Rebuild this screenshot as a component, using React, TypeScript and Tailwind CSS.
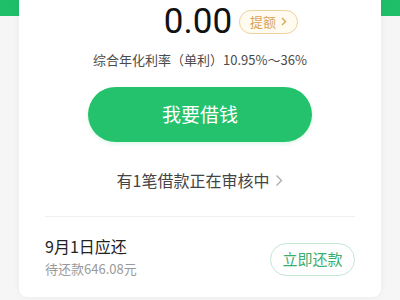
const App = () => {
  return (
    <div
      className="w-[400px] h-[300px] overflow-hidden bg-[linear-gradient(#1fbf6a_16px,#f6f6f6_16px)] px-[19px]"
      style={{ fontFamily: '"Noto Sans CJK SC", "Noto Sans", sans-serif' }}
    >
      <div className="bg-white h-[297px] rounded-b-lg shadow-[0_0_6px_rgba(0,0,0,0.06)] flex flex-col items-center">
        <div className="flex items-center mt-[3px] ml-[62px]">
          <span className="text-[35px] leading-[37px] text-[#111] font-['Roboto',sans-serif]">0.00</span>
          <span className="ml-[7px] h-[24px] px-[10px] rounded-full border border-[#ecd29c] bg-[#fffbf1] text-[#d8a455] text-[13px] flex items-center gap-[5px]">
            提额
            <svg width="6" height="9" viewBox="0 0 6 9" fill="none">
              <path d="M1 1l3.5 3.5L1 8" stroke="#d8a455" strokeWidth="1.4" />
            </svg>
          </span>
        </div>
        <div className="mt-[11px] text-[13px] leading-[18px] text-[#4a4a4a]">综合年化利率（单利）10.95%～36%</div>
        <button className="mt-[18px] w-[224px] h-[55px] rounded-full bg-[#25c26d] text-white text-[19px] shadow-[0_2px_4px_rgba(37,194,109,0.15)]">
          我要借钱
        </button>
        <div className="mt-[27px] flex items-center gap-[6px] text-[16px] leading-[22px] text-[#444]">
          有1笔借款正在审核中
          <svg width="8" height="13" viewBox="0 0 8 13" fill="none">
            <path d="M1.5 1.5l5 5-5 5" stroke="#aaa" strokeWidth="1.3" />
          </svg>
        </div>
        <div className="mt-[25px] w-[310px] h-px bg-[#f0f0f0]" />
        <div className="w-[310px] flex items-center justify-between mt-[18px]">
          <div className="flex flex-col">
            <span className="text-[16px] leading-[22px] text-[#222]">9月1日应还</span>
            <span className="text-[13px] leading-[18px] text-[#9a9a9a] mt-[3px]">待还款646.08元</span>
          </div>
          <button className="mt-[6px] w-[85px] h-[33px] rounded-full border border-[#c2e6d2] text-[#3aae6e] text-[15px]">
            立即还款
          </button>
        </div>
      </div>
    </div>
  );
};

export default App;
